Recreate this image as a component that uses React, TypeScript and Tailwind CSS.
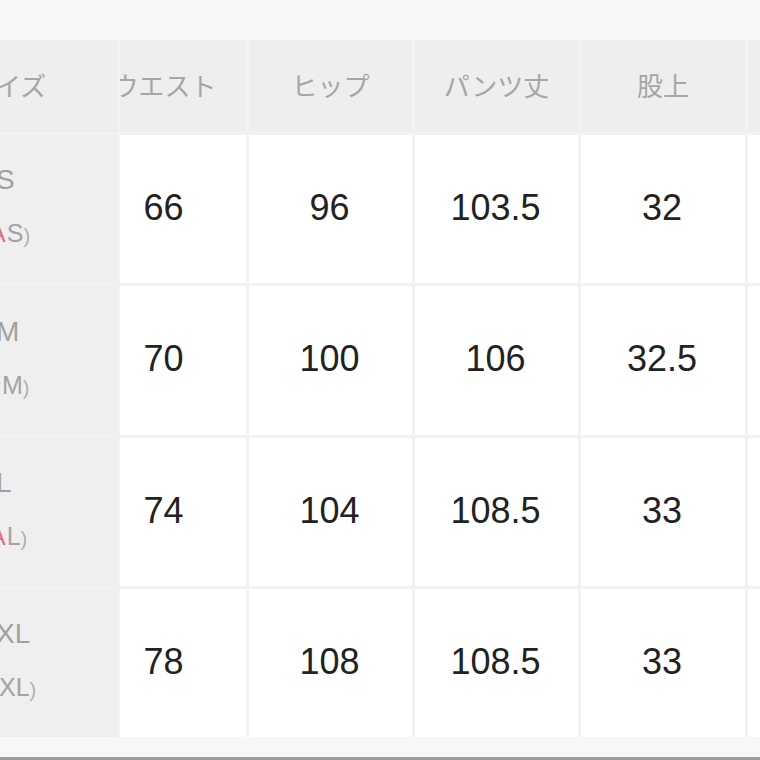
import React from "react";

type Column = {
  label: string;
  width: string;
  values: string[];
};

const columns: Column[] = [
  { label: "ウエスト", width: "w-[163px]", values: ["66", "70", "74", "78"] },
  { label: "ヒップ", width: "w-[163px]", values: ["96", "100", "104", "108"] },
  { label: "パンツ丈", width: "w-[163px]", values: ["103.5", "106", "108.5", "108.5"] },
  { label: "股上", width: "w-[164px]", values: ["32", "32.5", "33", "33"] },
  { label: "", width: "w-[163px]", values: ["", "", "", ""] },
];

const rowHeights = ["h-[148px]", "h-[149px]", "h-[148px]", "h-[148px]"];

const sizes = [
  { main: "S", sub: "S", prefix: "A", red: true },
  { main: "M", sub: "M", prefix: "/", red: false },
  { main: "L", sub: "L", prefix: "A", red: true },
  { main: "XL", sub: "XL", prefix: "", red: false },
];

const jp = { fontFamily: '"Noto Sans CJK JP", "Noto Sans", sans-serif' };
const latin = { fontFamily: '"Liberation Sans", Arial, sans-serif' };

const SizeColumn = () => {
  return (
    <div className="w-[118px] shrink-0 flex flex-col gap-[3px] overflow-hidden">
      <div className="h-[92px] bg-[#eeeeee] flex items-center overflow-hidden pb-[4px]">
        <span className="-ml-[31px] text-[26px] text-[#a6a6a6] whitespace-nowrap" style={jp}>
          サイズ
        </span>
      </div>
      {sizes.map((s, i) => (
        <div
          key={s.main}
          className={`${rowHeights[i]} bg-[#efefef] flex flex-col justify-center gap-[27px] overflow-hidden pb-[6px]`}
          style={latin}
        >
          <div className="-ml-[4px] text-[28px] leading-none text-[#a0a0a0] whitespace-nowrap">
            {s.main}
          </div>
          <div className="flex items-end text-[25px] leading-none text-[#a3a3a3] whitespace-nowrap">
            {s.prefix ? (
              <span
                className={
                  s.red
                    ? "-ml-[11px] text-[#e0707c]"
                    : "-ml-[4px] text-[#d8d8d8] text-[18px]"
                }
              >
                {s.prefix}
              </span>
            ) : (
              <span className="-ml-[2px]" />
            )}
            <span className="ml-[1px]">{s.sub}</span>
            <span className="text-[20px] text-[#b0b0b0]">)</span>
          </div>
        </div>
      ))}
    </div>
  );
};

const DataColumn = ({ column }: { column: Column }) => {
  return (
    <div className={`${column.width} shrink-0 flex flex-col gap-[3px]`}>
      <div className="h-[92px] bg-[#eeeeee] flex items-center justify-center pb-[4px]">
        <span className="text-[26px] text-[#a6a6a6] whitespace-nowrap" style={jp}>
          {column.label}
        </span>
      </div>
      {column.values.map((v, i) => (
        <div
          key={i}
          className={`${rowHeights[i]} bg-white flex items-center justify-center pb-[3px]`}
        >
          <span className="-ml-[2px] text-[36px] text-[#222222]" style={latin}>
            {v}
          </span>
        </div>
      ))}
    </div>
  );
};

export default function App() {
  return (
    <div className="w-[760px] h-[760px] flex flex-col bg-[#f8f8f8] overflow-hidden">
      <div className="h-[40px] shrink-0" />
      <div className="h-[697px] shrink-0 flex bg-[#f2f2f2]">
        <SizeColumn />
        <div className="ml-[2px] flex-1 overflow-hidden">
          <div className="flex gap-[3px] -ml-[37px]">
            {columns.map((c, i) => (
              <DataColumn key={i} column={c} />
            ))}
          </div>
        </div>
      </div>
      <div className="h-[20px] shrink-0 bg-[#f7f7f7]" />
      <div className="h-[3px] shrink-0 bg-[#9c9c9c]" />
    </div>
  );
}
